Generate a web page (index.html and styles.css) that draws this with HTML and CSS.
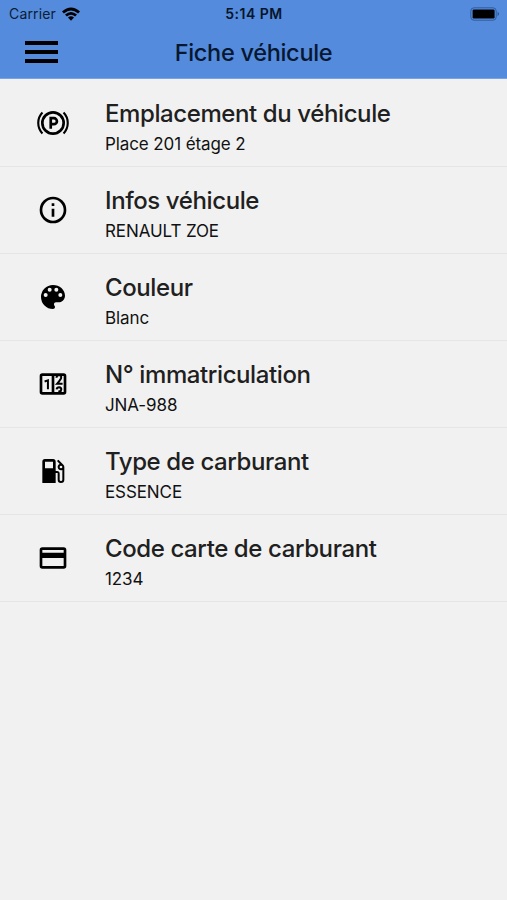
FILE: index.html
```html
<!DOCTYPE html>
<html lang="fr">
<head>
<meta charset="utf-8">
<title>Fiche véhicule</title>
<link rel="stylesheet" href="styles.css">
</head>
<body>
<header class="header">
  <div class="status">
    <div class="carrier"><span>Carrier</span>
      <svg class="wifi" viewBox="0 0 18 14"><path d="M0 4.6Q9-3.4 18 4.6L16.1 6.5Q9 .5 1.9 6.5Z"/><path d="M3 7.6Q9 2.4 15 7.6L13.1 9.5Q9 6 4.9 9.5Z"/><path d="M6 10.6Q9 8 12 10.6L9 13.8Z"/></svg>
    </div>
    <time class="clock">5:14 PM</time>
    <svg class="battery" viewBox="0 0 30 14"><rect x=".8" y=".8" width="25.4" height="12.4" rx="3.2" fill="none" stroke="#2f5d9f" stroke-width="1"/><rect x="2.6" y="2.5" width="22" height="9" rx="1.3"/><path d="M27.6 4.8Q30.4 7 27.6 9.2Z" fill="#27508f"/></svg>
  </div>
  <div class="toolbar">
    <div class="menu"><i></i><i></i><i></i></div>
    <h1>Fiche véhicule</h1>
  </div>
</header>
<main class="list">
  <section class="row">
    <svg class="icon" viewBox="0 0 24 24"><g fill="none" stroke="#000"><circle cx="12" cy="12" r="8" stroke-width="2"/><path d="M4.100 4.200A11.200 11.200 0 0 0 4.100 19.800M19.900 4.200A11.200 11.200 0 0 1 19.900 19.800" stroke-width="1.600"/><path d="M10.300 16.400V8.400H12.700A2.200 2.200 0 0 1 12.700 12.900H10.300" stroke-width="2"/></g></svg>
    <div class="text"><h2>Emplacement du véhicule</h2><p>Place 201 étage 2</p></div>
  </section>
  <section class="row">
    <svg class="icon" viewBox="0 0 24 24"><path d="M11 17h2v-6h-2zM12 2a10 10 0 1 0 0 20 10 10 0 0 0 0-20m0 18a8 8 0 1 1 0-16 8 8 0 0 1 0 16M11 9h2V7h-2z"/></svg>
    <div class="text"><h2>Infos véhicule</h2><p>RENAULT ZOE</p></div>
  </section>
  <section class="row">
    <svg class="icon" viewBox="0 0 24 24"><path d="M12 3a9 9 0 0 0 0 18c.83 0 1.500-.67 1.500-1.500 0-.39-.15-.74-.39-1.010-.23-.26-.38-.61-.38-.99 0-.83.67-1.500 1.500-1.500H16c2.760 0 5-2.240 5-5 0-4.420-4.030-8-9-8m-5.500 9a1.500 1.500 0 1 1 0-3 1.500 1.500 0 0 1 0 3m3-4a1.500 1.500 0 1 1 0-3 1.500 1.500 0 0 1 0 3m5 0a1.500 1.500 0 1 1 0-3 1.500 1.500 0 0 1 0 3m3 4a1.500 1.500 0 1 1 0-3 1.500 1.500 0 0 1 0 3"/></svg>
    <div class="text"><h2>Couleur</h2><p>Blanc</p></div>
  </section>
  <section class="row">
    <svg class="icon" viewBox="0 0 24 24"><path d="M4 4h16a2 2 0 0 1 2 2v12a2 2 0 0 1-2 2H4a2 2 0 0 1-2-2V6a2 2 0 0 1 2-2m0 2v12h7V6zm9 0v12h7V6z" fill-rule="evenodd"/><g fill="none" stroke="#000" stroke-width="1.500"><path d="M8.200 16V9.300L5.700 10.100"/><path d="M14.600 7.300Q14.800 5.300 16.600 5.300Q18.700 5.600 18 7.800Q17.500 9 15 11.900H19.200"/><path d="M14.700 16Q15 14.500 16.600 14.500Q18.400 14.700 18.200 16Q18 17.600 16 17.600Q18 17.800 18.300 18.500"/></g></svg>
    <div class="text"><h2>N° immatriculation</h2><p>JNA-988</p></div>
  </section>
  <section class="row">
    <svg class="icon" viewBox="0 0 24 24"><path d="M19.770 7.230l.01-.01-3.720-3.720L15 4.560l2.110 2.110A2.500 2.500 0 0 0 18 11.500c.36 0 .69-.08 1-.21v7.210a1 1 0 0 1-2 0V14a2 2 0 0 0-2-2h-1V5a2 2 0 0 0-2-2H6a2 2 0 0 0-2 2v16h10v-7.500h1.500v5a2.500 2.500 0 0 0 5 0V9c0-.69-.28-1.320-.73-1.770M12 10H6V5h6zm6 0a1 1 0 1 1 0-2 1 1 0 0 1 0 2"/></svg>
    <div class="text"><h2>Type de carburant</h2><p>ESSENCE</p></div>
  </section>
  <section class="row">
    <svg class="icon" viewBox="0 0 24 24"><path d="M20 4H4a2 2 0 0 0-2 2v12a2 2 0 0 0 2 2h16a2 2 0 0 0 2-2V6a2 2 0 0 0-2-2m0 14H4v-6h16zm0-10H4V6h16z"/></svg>
    <div class="text"><h2>Code carte de carburant</h2><p>1234</p></div>
  </section>
</main>
</body>
</html>
```
FILE: styles.css
```css
* { box-sizing: border-box; }
body { margin: 0; min-height: 900px; background: #f1f1f1; color: #000; font-family: Inter, "Liberation Sans", sans-serif; }
h1, h2, p { margin: 0; font-weight: 400; white-space: nowrap; }
.header { height: 79px; background: #548bdc; border-bottom: 1px solid #78a4e3; }
.status { height: 27px; display: grid; grid-template-columns: 1fr auto 1fr; align-items: center; padding: 0 7px 0 9px; }
.carrier { display: flex; align-items: center; gap: 6px; font-size: 14px; color: #0c1c35; letter-spacing: .15px; }
.wifi { width: 18px; height: 14px; }
.clock { font-size: 14px; font-weight: 600; color: #06152b; letter-spacing: .5px; margin-left: -1px; }
.battery { width: 30px; height: 14px; justify-self: end; }
.toolbar { height: 51px; display: grid; grid-template-columns: 1fr auto 1fr; align-items: center; padding: 0 0 0 25px; }
.toolbar h1 { font-size: 23.500px; color: #071730; margin-left: -25px; grid-column: 2; font-weight: 450; letter-spacing: -.3px; }
.menu { width: 33px; display: grid; gap: 5px; margin-top: -1px; }
.menu i { height: 4px; background: #000; }
.list { padding-top: .7px; }
.row { height: 87.100px; display: flex; border-bottom: 1px solid #e5e5e5; padding: 0 0 0 37px; }
.icon { width: 32px; height: 32px; margin-top: 27px; flex: none; }
.text { margin-left: 36px; padding-top: 17px; }
.text h2 { font-size: 24px; line-height: 34px; color: #202020; font-weight: 450; letter-spacing: -.4px; }
.text p { font-size: 17px; line-height: 26px; color: #111; letter-spacing: -.1px; }
```
